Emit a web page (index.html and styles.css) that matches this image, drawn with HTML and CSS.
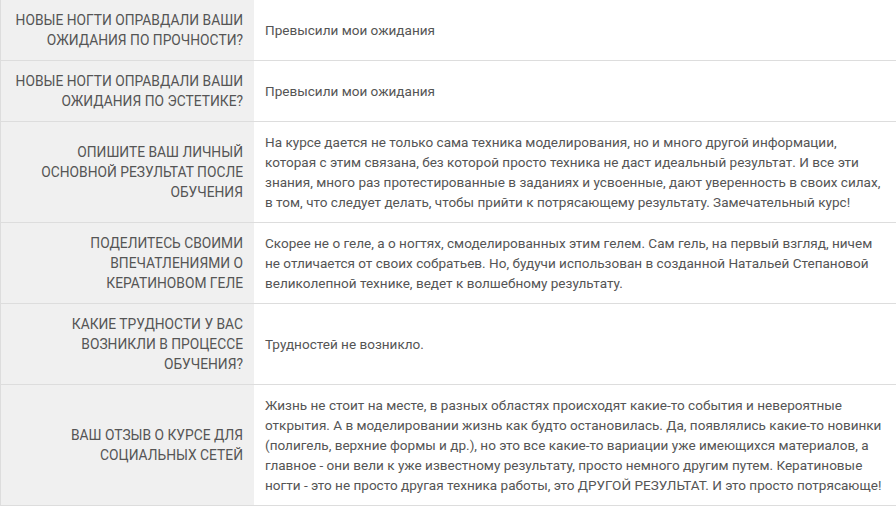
FILE: index.html
```html
<!DOCTYPE html>
<html lang="ru">
<head>
    <meta charset="UTF-8">
    <meta name="viewport" content="width=device-width, initial-scale=1.0">
    <title>Анкета</title>
    <link rel="stylesheet" href="styles.css">
</head>
<body>
    <table class="answers">
        <tr>
            <th>Новые ногти оправдали ваши ожидания по прочности?</th>
            <td>Превысили мои ожидания</td>
        </tr>
        <tr>
            <th>Новые ногти оправдали ваши ожидания по эстетике?</th>
            <td>Превысили мои ожидания</td>
        </tr>
        <tr>
            <th>Опишите ваш личный основной результат после обучения</th>
            <td>На курсе дается не только сама техника моделирования, но и много другой информации, которая с этим связана, без которой просто техника не даст идеальный результат. И все эти знания, много раз протестированные в заданиях и усвоенные, дают уверенность в своих силах, в том, что следует делать, чтобы прийти к потрясающему результату. Замечательный курс!</td>
        </tr>
        <tr>
            <th>Поделитесь своими впечатлениями о кератиновом геле</th>
            <td>Скорее не о геле, а о ногтях, смоделированных этим гелем. Сам гель, на первый взгляд, ничем не отличается от своих собратьев. Но, будучи использован в созданной Натальей Степановой великолепной технике, ведет к волшебному результату.</td>
        </tr>
        <tr>
            <th>Какие трудности у вас возникли в процессе обучения?</th>
            <td>Трудностей не возникло.</td>
        </tr>
        <tr>
            <th>Ваш отзыв о курсе для социальных сетей</th>
            <td>Жизнь не стоит на месте, в разных областях происходят какие-то события и невероятные открытия. А в моделировании жизнь как будто остановилась. Да, появлялись какие-то новинки (полигель, верхние формы и др.), но это все какие-то вариации уже имеющихся материалов, а главное - они вели к уже известному результату, просто немного другим путем. Кератиновые ногти - это не просто другая техника работы, это ДРУГОЙ РЕЗУЛЬТАТ. И это просто потрясающе!</td>
        </tr>
    </table>
</body>
</html>
```

FILE: styles.css
```css
body {
    margin: 0;
    background: #fff;
    font-family: Roboto, Arial, sans-serif;
    line-height: 20px;
    color: #555;
}
.answers {
    width: 896px;
    border-collapse: collapse;
    border-left: 1px solid #ddd;
}
.answers tr {
    border-bottom: 1px solid #ddd;
}
.answers th,
.answers td {
    padding: 10px 11px;
    vertical-align: middle;
}
.answers th {
    width: 231px;
    background: #f0f0f0;
    font-size: 13.8px;
    font-weight: normal;
    text-transform: uppercase;
    text-align: right;
}
.answers td {
    padding-right: 10px;
    font-size: 13.55px;
    text-align: left;
}
```
